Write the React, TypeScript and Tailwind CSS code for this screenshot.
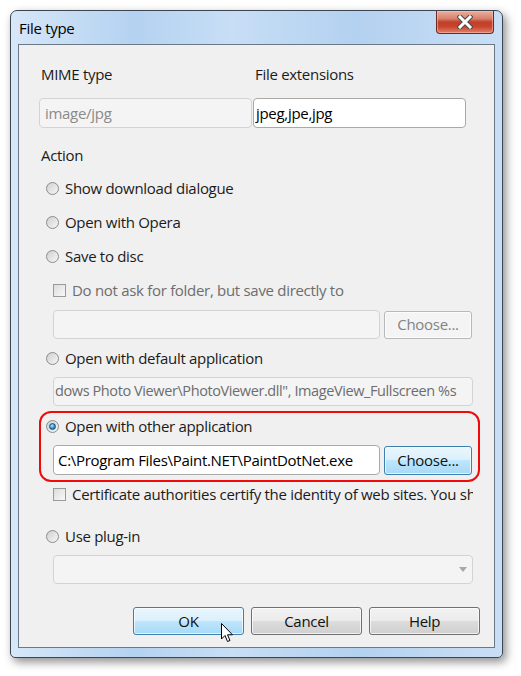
import { useState } from "react";

function Radio({ checked = false }: { checked?: boolean }) {
  return (
    <span className="flex h-[13px] w-[13px] shrink-0 items-center justify-center rounded-full border border-[#8b8c8d] bg-[linear-gradient(135deg,#cfcfcf,#f7f7f7)]">
      {checked && (
        <span className="h-[7px] w-[7px] rounded-full border border-[#1d4f77] bg-[radial-gradient(circle_at_40%_35%,#c6efff,#3aa0dc_45%,#0e4d80)]" />
      )}
    </span>
  );
}

function Check() {
  return (
    <span className="h-[13px] w-[13px] shrink-0 border border-[#9a9a9a] bg-[linear-gradient(135deg,#dcdcdc,#f8f8f8)]" />
  );
}

function Field({
  text,
  className,
  textClass,
}: {
  text?: string;
  className: string;
  textClass?: string;
}) {
  return (
    <div
      className={
        "flex items-center overflow-hidden whitespace-nowrap rounded-[4px] border " +
        className
      }
    >
      <span className={textClass}>{text}</span>
    </div>
  );
}

function WinButton({
  label,
  kind = "normal",
  className = "",
}: {
  label: string;
  kind?: "normal" | "hot" | "disabled";
  className?: string;
}) {
  const look =
    kind === "hot"
      ? "border-[#3c7fb1] bg-[linear-gradient(#eaf6fd,#d9f0fc_50%,#bee6fd_50%,#a7d9f5)] text-[#111]"
      : kind === "disabled"
        ? "border-[#b5b9bc] bg-[#f4f4f4] text-[#838383]"
        : "border-[#707070] bg-[linear-gradient(#f2f2f2,#ebebeb_50%,#dddddd_50%,#cfcfcf)] text-[#111]";
  return (
    <div
      className={
        "flex items-center justify-center rounded-[3px] border shadow-[inset_0_0_0_1px_rgba(255,255,255,0.7)] " +
        look +
        " " +
        className
      }
    >
      {label}
    </div>
  );
}

export default function App() {
  const [action] = useState("other");

  return (
    <div className="min-h-screen bg-white pl-[10px] pt-[10px] font-['Segoe_UI','Open_Sans',sans-serif] text-[15px] leading-none tracking-[-0.3px] text-[#1b1b1b]">
      {/* window frame */}
      <div className="flex h-[648px] w-[493px] flex-col rounded-t-[7px] rounded-b-[5px] border border-[#3d4650] bg-[linear-gradient(90deg,#d6e7f8,#b4d2f1_25%,#c7def5_45%,#b3d1f0_70%,#c9def5)] shadow-[3px_4px_10px_rgba(0,0,0,0.45)]">
        {/* title bar */}
        <div className="flex h-[33px] items-start">
          <span className="ml-[8px] mt-[10px] text-[15px] text-black">File type</span>
          <div className="ml-auto mr-[8px] flex h-[23px] w-[58px] items-center justify-center rounded-b-[4px] border border-t-0 border-[#6a2a1f] bg-[linear-gradient(#eab0a0,#d8806b_35%,#c0402a_50%,#c8442c_70%,#e2806a)] shadow-[inset_0_0_0_1px_rgba(255,200,190,0.5)]">
            <svg width="16" height="14" viewBox="0 0 16 14">
              <path d="M3 2 L13 12 M13 2 L3 12" stroke="#4a4a4a" strokeWidth="5" strokeLinecap="square" />
              <path d="M3 2 L13 12 M13 2 L3 12" stroke="#ffffff" strokeWidth="3" strokeLinecap="square" />
            </svg>
          </div>
        </div>

        {/* client area */}
        <div className="mx-[7px] flex h-[604px] flex-col border border-[#6b7886] bg-[#f0f0f0]">
          <div className="ml-[20px] mt-[17px] flex h-[24px] items-center">
            <span className="w-[214px] pl-[2px]">MIME type</span>
            <span className="pl-[2px]">File extensions</span>
          </div>

          <div className="ml-[20px] mt-[12px] flex h-[30px]">
            <Field
              text="image/jpg"
              className="mr-[1px] w-[213px] border-[#d3d3d3] bg-[#f4f4f4] pl-[5px]"
              textClass="text-[#8a8a8a]"
            />
            <Field
              text="jpeg,jpe,jpg"
              className="w-[213px] border-[#a9a9a9] bg-white pl-[2px]"
              textClass="text-black"
            />
          </div>

          <div className="ml-[22px] mt-[15px] flex h-[24px] items-center">Action</div>

          <div className="ml-[27px] mt-[9px] flex h-[24px] items-center gap-[6px]">
            <Radio checked={action === "show"} />
            <span>Show download dialogue</span>
          </div>
          <div className="ml-[27px] mt-[10px] flex h-[24px] items-center gap-[6px]">
            <Radio checked={action === "opera"} />
            <span>Open with Opera</span>
          </div>
          <div className="ml-[27px] mt-[10px] flex h-[24px] items-center gap-[6px]">
            <Radio checked={action === "save"} />
            <span>Save to disc</span>
          </div>

          <div className="ml-[34px] mt-[10px] flex h-[24px] items-center gap-[6px]">
            <Check />
            <span className="text-[#6d6d6d]">Do not ask for folder, but save directly to</span>
          </div>

          <div className="ml-[34px] mt-[8px] flex h-[29px] items-center">
            <Field text="" className="h-[29px] w-[327px] border-[#d3d3d3] bg-[#f4f4f4]" />
            <WinButton label="Choose..." kind="disabled" className="ml-[4px] h-[28px] w-[88px]" />
          </div>

          <div className="ml-[27px] mt-[7px] flex h-[24px] items-center gap-[6px]">
            <Radio checked={action === "default"} />
            <span>Open with default application</span>
          </div>

          <div className="ml-[34px] mt-[7px] flex h-[29px]">
            <Field
              text={'dows Photo Viewer\\PhotoViewer.dll", ImageView_Fullscreen %s'}
              className="w-[420px] border-[#d3d3d3] bg-[#f4f4f4] pl-[1px]"
              textClass="text-[14.5px] tracking-[-0.4px] text-[#6d6d6d]"
            />
          </div>

          {/* highlighted group */}
          <div className="ml-[20px] mt-[5px] flex h-[71px] w-[441px] flex-col rounded-[12px] border-2 border-[#f20a0a]">
            <div className="ml-[5px] mt-[1px] flex h-[24px] items-center gap-[6px]">
              <Radio checked={action === "other"} />
              <span>Open with other application</span>
            </div>
            <div className="ml-[12px] mt-[7px] flex h-[30px] items-center">
              <Field
                text={"C:\\Program Files\\Paint.NET\\PaintDotNet.exe"}
                className="h-[30px] w-[327px] border-[#a9a9a9] bg-white pl-[4px]"
                textClass="text-black"
              />
              <WinButton label="Choose..." kind="hot" className="ml-[4px] h-[29px] w-[88px]" />
            </div>
          </div>

          <div className="ml-[34px] flex h-[24px] w-[420px] items-center gap-[6px] overflow-hidden whitespace-nowrap">
            <Check />
            <span>Certificate authorities certify the identity of web sites. You sho</span>
          </div>

          <div className="ml-[27px] mt-[18px] flex h-[24px] items-center gap-[6px]">
            <Radio checked={action === "plugin"} />
            <span>Use plug-in</span>
          </div>

          <div className="relative ml-[34px] mt-[7px] h-[29px] w-[420px] rounded-[4px] border border-[#d3d3d3] bg-[#f4f4f4]">
            <span className="absolute right-[5px] top-[11px] h-0 w-0 border-x-[4px] border-t-[5px] border-x-transparent border-t-[#a8a8a8]" />
          </div>

          <div className="ml-[114px] mt-[23px] flex h-[28px] gap-[7px]">
            <div className="relative">
              <WinButton label="OK" kind="hot" className="h-[28px] w-[111px]" />
              <svg
                className="absolute left-[88px] top-[16px]"
                width="13"
                height="20"
                viewBox="0 0 13 20"
              >
                <path
                  d="M0.5 0.5 L0.5 16 L4 12.5 L6.5 18.5 L9 17.5 L6.5 11.8 L11.5 11.8 Z"
                  fill="#ffffff"
                  stroke="#000000"
                  strokeWidth="1"
                  strokeLinejoin="miter"
                />
              </svg>
            </div>
            <WinButton label="Cancel" className="h-[28px] w-[111px]" />
            <WinButton label="Help" className="h-[28px] w-[111px]" />
          </div>
        </div>
      </div>
    </div>
  );
}
